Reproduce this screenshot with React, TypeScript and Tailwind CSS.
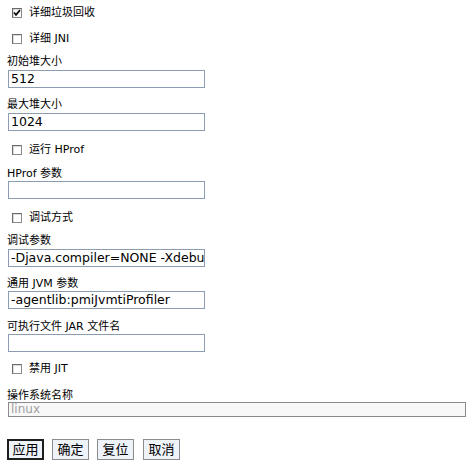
import { ReactNode } from "react";

function Check({ checked, children, className }: { checked?: boolean; children: ReactNode; className?: string }) {
  return (
    <div className={`flex items-center h-[10px] ml-[5px] ${className ?? ""}`}>
      <span className="relative w-[10px] h-[10px] border border-[#8a8a8a] border-t-[#6a6a6a] border-l-[#6a6a6a] bg-white shadow-[inset_1px_1px_0_#dcdcdc]">
        {checked && (
          <svg className="absolute left-[0px] top-[0px]" width="8" height="8" viewBox="0 0 8 8">
            <path d="M1 3.5 L3 5.8 L7 1.2" stroke="#111" strokeWidth="1.8" fill="none" />
          </svg>
        )}
      </span>
      <span className="ml-[7px] leading-[14px]">{children}</span>
    </div>
  );
}

function Label({ children, className }: { children: ReactNode; className?: string }) {
  return <div className={`leading-[14px] h-[14px] ${className ?? ""}`}>{children}</div>;
}

function Field({ value, className }: { value?: string; className?: string }) {
  return (
    <div
      className={`ml-[1px] w-[197px] h-[18px] border border-[#8c9db3] bg-white pl-[2px] text-[12.5px] leading-[16px] whitespace-nowrap overflow-hidden ${className ?? ""}`}
    >
      {value}
    </div>
  );
}

export default function App() {
  return (
    <main className="w-[471px] h-[466px] bg-white pl-[7px] pt-[8px] text-[11px] text-black font-['DejaVu_Sans','Noto_Sans_CJK_SC',sans-serif] overflow-hidden">
      <Check checked>详细垃圾回收</Check>
      <Check className="mt-[16px]">详细 JNI</Check>

      <Label className="mt-[11px]">初始堆大小</Label>
      <Field value="512" className="mt-[1px]" />

      <Label className="mt-[10px]">最大堆大小</Label>
      <Field value="1024" className="mt-[1px]" />

      <Check className="mt-[14px]">运行 HProf</Check>

      <Label className="mt-[12px]">HProf 参数</Label>
      <Field />

      <Check className="mt-[14px]">调试方式</Check>

      <Label className="mt-[11px]">调试参数</Label>
      <Field value="-Djava.compiler=NONE -Xdebug" className="mt-[1px]" />

      <Label className="mt-[10px]">通用 JVM 参数</Label>
      <Field value="-agentlib:pmiJvmtiProfiler" />

      <Label className="mt-[11px]">可执行文件 JAR 文件名</Label>
      <Field />

      <Check className="mt-[12px]">禁用 JIT</Check>

      <div className="mt-[16px] leading-[12px] h-[12px]">操作系统名称</div>
      <div className="ml-[1px] w-[458px] h-[15px] border border-[#8a8a8a] bg-[#f8f8f8] pl-[2px] text-[12px] leading-[13px] text-[#a0a0a0]">
        linux
      </div>

      <div className="mt-[22px] flex text-[13px]">
        <button className="w-[37px] h-[21px] border-2 border-[#1e1e1e] bg-[#eef2f9] leading-[17px]">应用</button>
        <button className="ml-[8px] w-[37px] h-[21px] border border-[#8c8c8c] bg-[#eef2f9] leading-[19px]">确定</button>
        <button className="ml-[8px] w-[37px] h-[21px] border border-[#8c8c8c] bg-[#eef2f9] leading-[19px]">复位</button>
        <button className="ml-[9px] w-[37px] h-[21px] border border-[#8c8c8c] bg-[#eef2f9] leading-[19px]">取消</button>
      </div>
    </main>
  );
}
